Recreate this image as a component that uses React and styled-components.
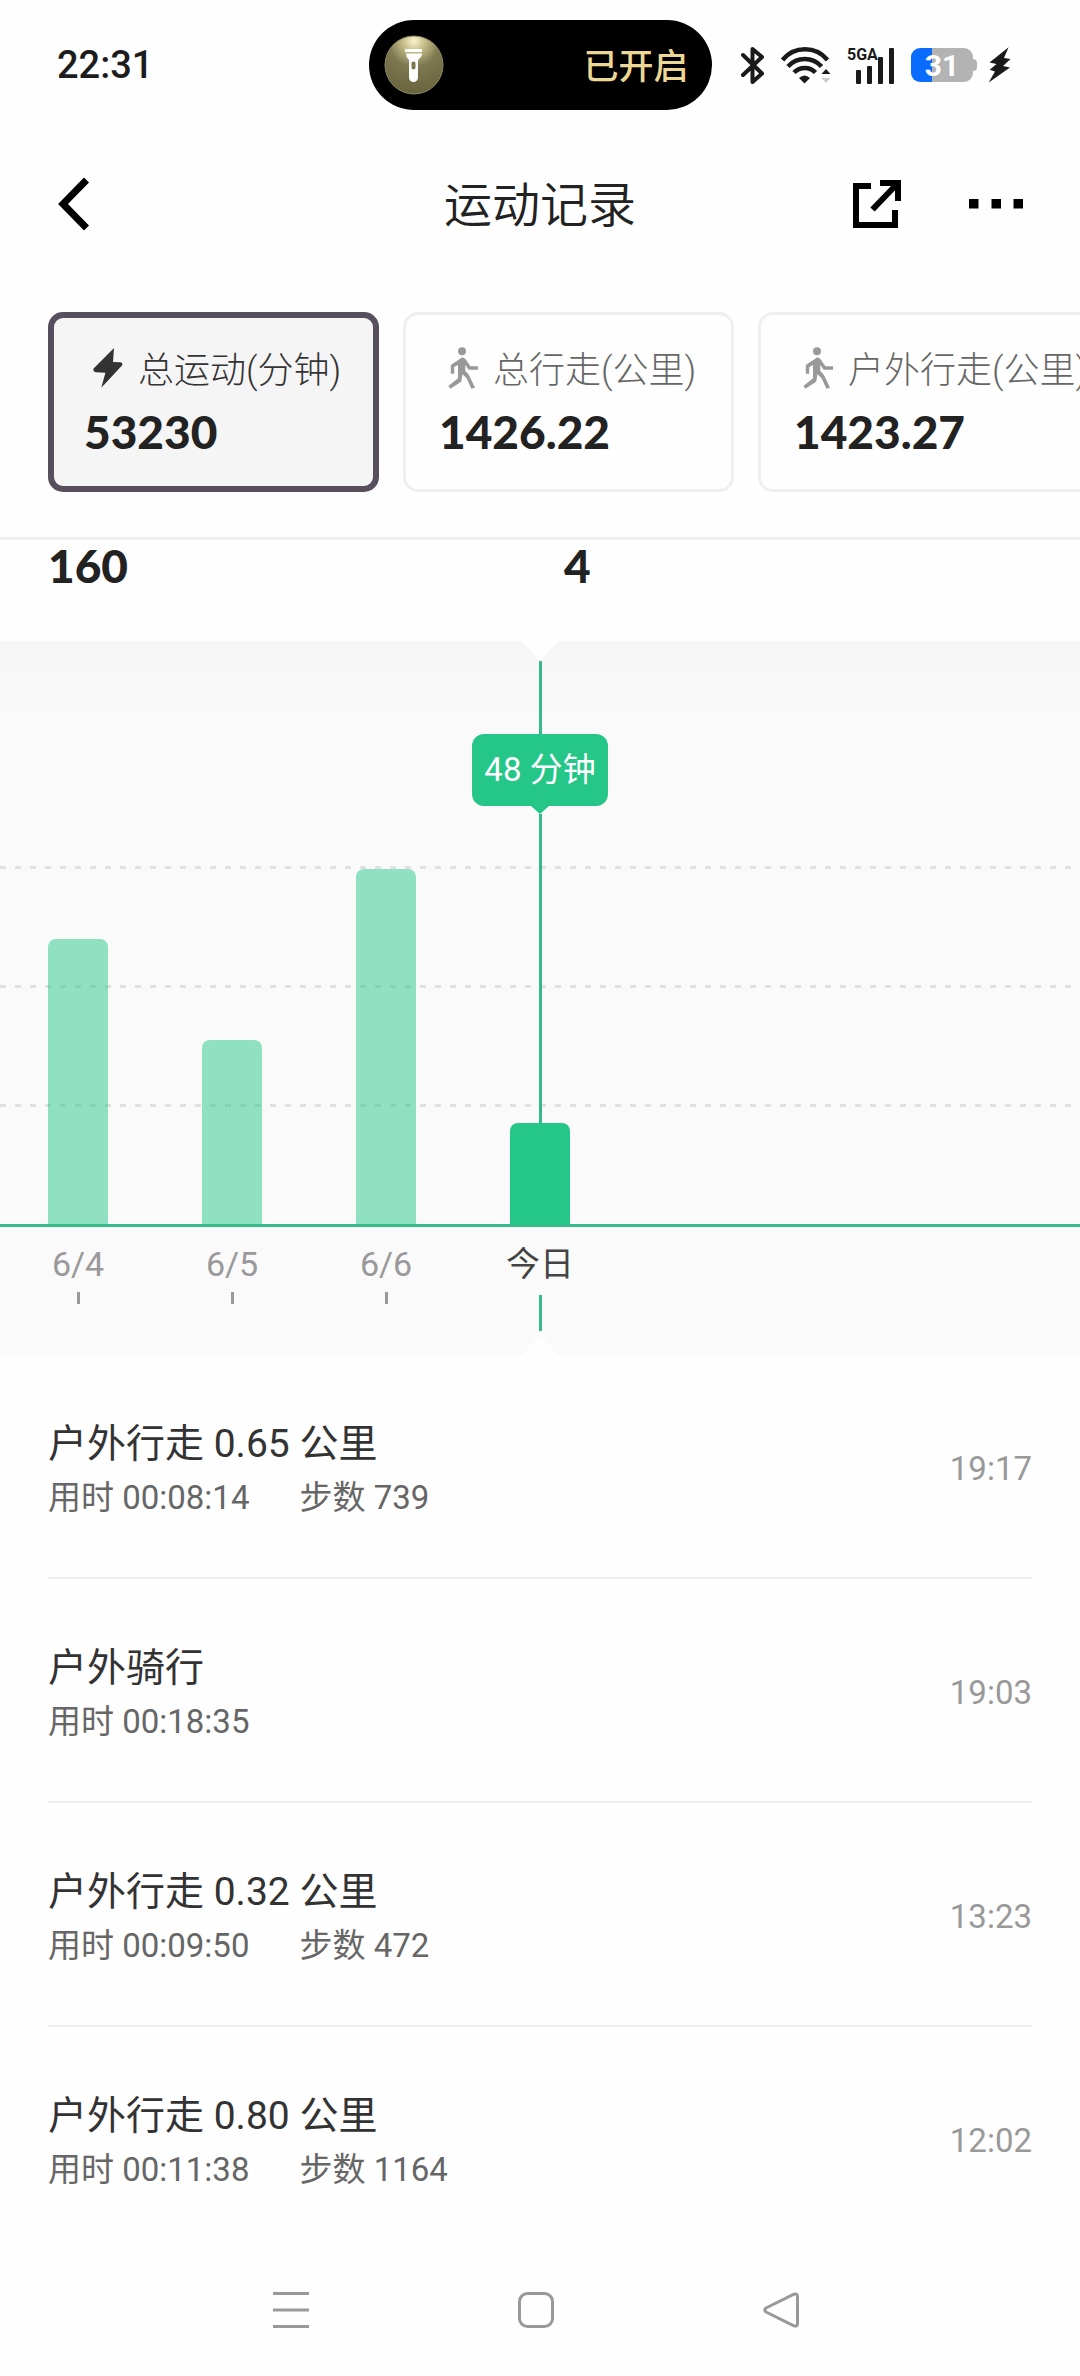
import React from "react";
import styled, { createGlobalStyle } from "styled-components";

const GlobalStyle = createGlobalStyle`
  * {
    box-sizing: border-box;
  }

  body {
    margin: 0;
    background: #fefefe;
    color: #222;
    font-family: Roboto, "Noto Sans CJK SC", sans-serif;
  }

  button {
    margin: 0;
    padding: 0;
    border: none;
    background: none;
    color: inherit;
    font: inherit;
    text-align: left;
    cursor: pointer;
  }

  svg {
    display: block;
    flex: none;
  }
`;

const Page = styled.div`
  display: flex;
  flex-direction: column;
  min-height: 100vh;
  overflow: hidden;
`;

/* status bar */

const StatusBar = styled.div`
  display: grid;
  grid-template-columns: 1fr auto 1fr;
  align-items: center;
  height: 130px;
  padding: 0 68px 0 57px;
`;

const Clock = styled.time`
  font-size: 38px;
  font-weight: 500;
  color: #1c1c1c;
`;

const Island = styled.div`
  display: flex;
  align-items: center;
  justify-content: space-between;
  width: 343px;
  height: 90px;
  margin-left: 11px;
  padding: 0 23px 0 15px;
  border-radius: 45px;
  background: #000;
  color: #ecd795;
  font-size: 35px;
  font-weight: 500;
`;

const IslandText = styled.span`
  padding-bottom: 4px;
`;

const StatusIcons = styled.div`
  display: flex;
  align-items: center;
  justify-content: flex-end;
  gap: 16px;
  color: #1a1a1a;
`;

const Signal = styled.div`
  display: grid;

  > * {
    grid-area: 1 / 1;
  }
`;

const SignalLabel = styled.span`
  font-family: "Liberation Sans Narrow", Roboto, sans-serif;
  font-size: 16px;
  font-weight: 700;
  line-height: 16px;
`;

const Power = styled.div`
  display: flex;
  align-items: center;
  gap: 11px;
`;

const Battery = styled.div`
  position: relative;
  width: 62px;
  height: 34px;
  margin-right: 4px;
  border-radius: 9px;
  background: linear-gradient(90deg, #0a6cff 21px, #b3b3b3 21px);
  color: #fff;
  font-size: 30px;
  font-weight: 700;
  line-height: 36px;
  text-align: center;

  &::after {
    content: "";
    position: absolute;
    top: 11px;
    right: -4px;
    width: 4px;
    height: 12px;
    border-radius: 0 4px 4px 0;
    background: #b3b3b3;
  }
`;

/* title bar */

const Header = styled.header`
  display: grid;
  grid-template-columns: 1fr auto 1fr;
  align-items: center;
  height: 148px;
  padding: 0 57px;
`;

const Title = styled.h1`
  margin: 0;
  padding-top: 4px;
  font-size: 48px;
  font-weight: 350;
  line-height: 60px;
`;

const Actions = styled.div`
  display: flex;
  align-items: center;
  justify-content: ${(p) => (p.$end ? "flex-end" : "flex-start")};
  gap: 68px;
`;

/* summary cards */

const CardStrip = styled.div`
  display: flex;
  gap: 24px;
  padding: 34px 48px 45px;
  border-bottom: 3px solid #f1f1f1;
  overflow-x: auto;
  scrollbar-width: none;
`;

const Card = styled.button`
  flex: none;
  display: flex;
  flex-direction: column;
  justify-content: center;
  min-width: 331px;
  height: 180px;
  padding: 6px ${(p) => (p.$active ? 30 : 33)}px 0;
  border: ${(p) => (p.$active ? "6px solid #574f5e" : "3px solid #efefef")};
  border-radius: 15px;
  background: ${(p) => (p.$active ? "#f5f5f5" : "#fefefe")};
`;

const CardLabel = styled.span`
  display: flex;
  align-items: center;
  gap: 6px;
  color: ${(p) => (p.$active ? "#333" : "#666")};
  font-size: 36px;
  font-weight: 300;
  line-height: 54px;
  white-space: nowrap;
`;

const CardIcon = styled.span`
  display: flex;
  justify-content: center;
  width: 48px;
  padding-bottom: 6px;
  color: ${(p) => (p.$active ? "#333" : "#999")};
`;

const Figure = styled.span`
  font-family: Lato, sans-serif;
  font-size: 46px;
  font-weight: 900;
  line-height: ${(p) => p.$line}px;
`;

const Totals = styled.div`
  display: grid;
  grid-template-columns: 1fr 1fr;
  height: 101px;
  padding-left: 48px;
`;

/* chart */

const Chart = styled.section`
  background: linear-gradient(#f6f6f6, #fafafa 80px);
`;

const dash = "linear-gradient(90deg, #e0e0e0 6px, transparent 6px)";

const Plot = styled.div`
  display: flex;
  gap: 94px;
  height: 586px;
  padding: 0 48px;
  border-bottom: 3px solid #35bb88;
  background: ${dash} 0 225px / 15px 3px repeat-x,
    ${dash} 0 344px / 15px 3px repeat-x, ${dash} 0 463px / 15px 3px repeat-x;
`;

const Axis = styled.div`
  display: flex;
  gap: 94px;
  height: 128px;
  padding: 0 48px;
`;

const Column = styled.div`
  flex: none;
  display: flex;
  flex-direction: column;
  align-items: center;
  justify-content: flex-end;
  width: 60px;
`;

const Bar = styled.div`
  flex: none;
  width: 60px;
  border-radius: 8px 8px 0 0;
  background: ${(p) => (p.$active ? "#25c789" : "rgba(37, 199, 137, 0.5)")};
`;

const Notch = styled.div`
  flex: none;
  width: 36px;
  height: 20px;
  background: #fefefe;
  clip-path: ${(p) =>
    p.$up ? "polygon(0 100%, 50% 0, 100% 100%)" : "polygon(0 0, 100% 0, 50% 100%)"};
`;

const Guide = styled.div`
  flex: ${(p) => (p.$length ? `0 0 ${p.$length}px` : 1)};
  width: 3px;
  margin-left: 1px;
  background: #35bb88;
`;

const Bubble = styled.div`
  flex: none;
  padding: 0 12px;
  border-radius: 12px;
  background: #25c789;
  color: #fff;
  font-size: 33px;
  line-height: 72px;
  white-space: nowrap;
`;

const BubbleTip = styled.div`
  flex: none;
  width: 18px;
  height: 8px;
  background: #25c789;
  clip-path: polygon(0 0, 100% 0, 50% 100%);
`;

const Day = styled.div`
  flex: 1;
  display: flex;
  flex-direction: column;
  align-items: center;
  padding-top: 14px;
  color: ${(p) => (p.$active ? "#444" : "#999")};
  font-size: 34px;
  line-height: 46px;
  white-space: nowrap;
`;

const Tick = styled.div`
  width: 3px;
  height: ${(p) => (p.$active ? 36 : 12)}px;
  margin: ${(p) => (p.$active ? 8 : 5)}px 0 0 1px;
  background: ${(p) => (p.$active ? "#35bb88" : "#999")};
`;

/* records */

const Records = styled.ul`
  margin: 0;
  padding: 0 48px;
  list-style: none;
`;

const Record = styled.li`
  display: flex;
  align-items: center;
  justify-content: space-between;
  height: 224px;
  padding-top: 4px;
  border-bottom: 2px solid #ececec;

  &:last-child {
    border-bottom-color: transparent;
  }
`;

const RecordName = styled.div`
  color: #333;
  font-size: 39px;
  line-height: 60px;
`;

const RecordInfo = styled.div`
  display: flex;
  gap: 50px;
  color: #666;
  font-size: 33px;
  line-height: 48px;
`;

const RecordTime = styled.time`
  color: #999;
  font-size: 33px;
`;

const NavBar = styled.nav`
  display: flex;
  justify-content: center;
  gap: 209px;
  margin-top: auto;
  padding: 41px 8px 48px 0;
  color: #999;
`;

const cards = [
  { label: "总运动(分钟)", value: "53230", icon: "bolt", active: true },
  { label: "总行走(公里)", value: "1426.22", icon: "walk" },
  { label: "户外行走(公里)", value: "1423.27", icon: "walk" },
];

const days = [
  { label: "6/4", minutes: 135 },
  { label: "6/5", minutes: 87 },
  { label: "6/6", minutes: 168 },
  { label: "今日", minutes: 48, active: true },
];

const records = [
  { name: "户外行走 0.65 公里", duration: "00:08:14", steps: 739, time: "19:17" },
  { name: "户外骑行", duration: "00:18:35", time: "19:03" },
  { name: "户外行走 0.32 公里", duration: "00:09:50", steps: 472, time: "13:23" },
  { name: "户外行走 0.80 公里", duration: "00:11:38", steps: 1164, time: "12:02" },
];

// height of a bar in px
const barHeight = (minutes) => Math.round((minutes * 355) / 168);

const Torch = () => (
  <svg width="60" height="60" viewBox="0 0 60 60">
    <defs>
      <radialGradient id="glow" cx="0.5" cy="0.08" r="0.9">
        <stop offset="0" stopColor="#fbf3cf" />
        <stop offset="0.2" stopColor="#c9c08c" />
        <stop offset="0.5" stopColor="#7d7850" />
        <stop offset="1" stopColor="#69653f" />
      </radialGradient>
    </defs>
    <circle cx="30" cy="30" r="29" fill="url(#glow)" stroke="#8f8a60" />
    <path d="M21 14h17v3H21z" fill="#fff" />
    <path d="M22 18.500h16q0 3-4 6.500V42.500a4.500 4.500 0 0 1-9 0V25q-3-3-3-6.500z" fill="#fff" />
    <rect x="27.500" y="26.500" width="4" height="8" rx="2" fill="#7d7850" />
  </svg>
);

const Bluetooth = () => (
  <svg width="24" height="37" viewBox="0 0 24 37" fill="none" stroke="currentColor" strokeWidth="4" strokeLinejoin="round" strokeLinecap="round">
    <path d="M2 8l19 18.500-9.500 8.500V2L21 10 2 28" />
  </svg>
);

const Wifi = () => (
  <svg width="50" height="37" viewBox="0 0 50 37">
    <g fill="none" stroke="currentColor" strokeWidth="4.500">
      <path d="M1.500 13A29 29 0 0 1 46.500 13" />
      <path d="M7 19.500A22.500 22.500 0 0 1 40.500 19.500" />
      <path d="M13 25.500A15 15 0 0 1 34.500 25.500" />
    </g>
    <path d="M18 31q5.500-5 11 0l-5.500 5.500z" fill="currentColor" />
    <path d="M40.500 27l4.500-5 4.500 5z" fill="currentColor" />
    <path d="M40.500 31l4.500 5 4.500-5z" fill="#ccc" />
  </svg>
);

const SignalBars = () => (
  <svg width="48" height="37" viewBox="0 0 48 37" fill="currentColor">
    <rect x="9" y="23" width="5" height="14" rx="1" />
    <rect x="20" y="19" width="5" height="18" rx="1" />
    <rect x="31" y="10" width="5" height="27" rx="1" />
    <rect x="42" y="1" width="5" height="36" rx="1" />
  </svg>
);

const Charging = () => (
  <svg width="24" height="36" viewBox="0 0 24 36" fill="currentColor">
    <path d="M20.600.3L1.500 15.500l7 1.500-6.800 5.800L7 24.500.7 35.600 22 20.600 15 19l7.500-7-6.500-1z" />
  </svg>
);

const Bolt = () => (
  <svg width="30" height="40" viewBox="0 0 30 40" fill="currentColor">
    <path d="M21 0L.6 20.500Q-.5 24 3 24.300l9.400.4L8.300 39.700 29 17.500q1.500-3-2-3.300L20 14z" />
  </svg>
);

const Walk = () => (
  <svg width="30" height="42" viewBox="0 0 30 42" fill="currentColor">
    <circle cx="14" cy="4.200" r="4" />
    <path d="M14 10.500q2.500 0 4 2.200l4.400 6.600H30v3.400h-9.300L17.300 18v6q3.500 3 4.700 6l5 10.700-3.600 1-4.800-10.400-4.100-4-1.300 7.400L2.400 41.700.4 39 10 31.300V18l-3.800 2v6.700H2.800V18z" />
  </svg>
);

const Back = () => (
  <svg width="32" height="54" viewBox="0 0 32 54" fill="none" stroke="#000" strokeWidth="7">
    <path d="M29.500 3L6 27l23.500 24" />
  </svg>
);

const Share = () => (
  <svg width="48" height="48" viewBox="0 0 48 48" fill="none" stroke="#000" strokeWidth="6">
    <path d="M18 6H3v39h39V30" />
    <path d="M27 3h18v18M44 4L19.500 29.500" />
  </svg>
);

const More = () => (
  <svg width="54" height="10" viewBox="0 0 54 10">
    <path d="M0 0h9.500v9.500H0zM22.500 0H32v9.500h-9.500zM44.500 0H54v9.500h-9.500z" />
  </svg>
);

const navIcon = {
  width: 36,
  height: 36,
  viewBox: "0 0 36 36",
  fill: "none",
  stroke: "currentColor",
  strokeWidth: 3,
  strokeLinejoin: "round",
};

const App = () => (
  <>
    <GlobalStyle />
    <Page>
      <StatusBar>
        <Clock>22:31</Clock>
        <Island>
          <Torch />
          <IslandText>已开启</IslandText>
        </Island>
        <StatusIcons>
          <Bluetooth />
          <Wifi />
          <Signal>
            <SignalBars />
            <SignalLabel>5GA</SignalLabel>
          </Signal>
          <Power>
            <Battery>31</Battery>
            <Charging />
          </Power>
        </StatusIcons>
      </StatusBar>

      <Header>
        <Actions>
          <button type="button" aria-label="返回">
            <Back />
          </button>
        </Actions>
        <Title>运动记录</Title>
        <Actions $end>
          <button type="button" aria-label="分享">
            <Share />
          </button>
          <button type="button" aria-label="更多">
            <More />
          </button>
        </Actions>
      </Header>

      <CardStrip>
        {cards.map((card) => (
          <Card key={card.label} type="button" $active={card.active}>
            <CardLabel $active={card.active}>
              <CardIcon $active={card.active}>
                {card.icon === "bolt" ? <Bolt /> : <Walk />}
              </CardIcon>
              {card.label}
            </CardLabel>
            <Figure $line={68}>{card.value}</Figure>
          </Card>
        ))}
      </CardStrip>

      <Totals>
        <Figure $line={52}>160</Figure>
        <Figure $line={52}>4</Figure>
      </Totals>

      <Chart>
        <Plot>
          {days.map((day) => (
            <Column key={day.label}>
              {day.active && (
                <>
                  <Notch />
                  <Guide $length={73} />
                  <Bubble>{day.minutes} 分钟</Bubble>
                  <BubbleTip />
                  <Guide />
                </>
              )}
              <Bar $active={day.active} style={{ height: barHeight(day.minutes) }} />
            </Column>
          ))}
        </Plot>
        <Axis>
          {days.map((day) => (
            <Column key={day.label}>
              <Day $active={day.active}>
                {day.label}
                <Tick $active={day.active} />
              </Day>
              {day.active && <Notch $up />}
            </Column>
          ))}
        </Axis>
      </Chart>

      <Records>
        {records.map((record) => (
          <Record key={record.time}>
            <div>
              <RecordName>{record.name}</RecordName>
              <RecordInfo>
                <span>用时 {record.duration}</span>
                {record.steps && <span>步数 {record.steps}</span>}
              </RecordInfo>
            </div>
            <RecordTime>{record.time}</RecordTime>
          </Record>
        ))}
      </Records>

      <NavBar>
        <button type="button" aria-label="最近任务">
          <svg {...navIcon}>
            <path d="M0 1.500h36M0 18h36M0 34.500h36" />
          </svg>
        </button>
        <button type="button" aria-label="主屏幕">
          <svg {...navIcon}>
            <rect x="1.500" y="1.500" width="33" height="33" rx="8" />
          </svg>
        </button>
        <button type="button" aria-label="后退">
          <svg {...navIcon}>
            <path d="M31 2.200L3 16q-2.500 2 0 4l28 13.800q3.500 1 3.500-2.300v-27q0-3.300-3.500-2.300z" />
          </svg>
        </button>
      </NavBar>
    </Page>
  </>
);

export default App;
